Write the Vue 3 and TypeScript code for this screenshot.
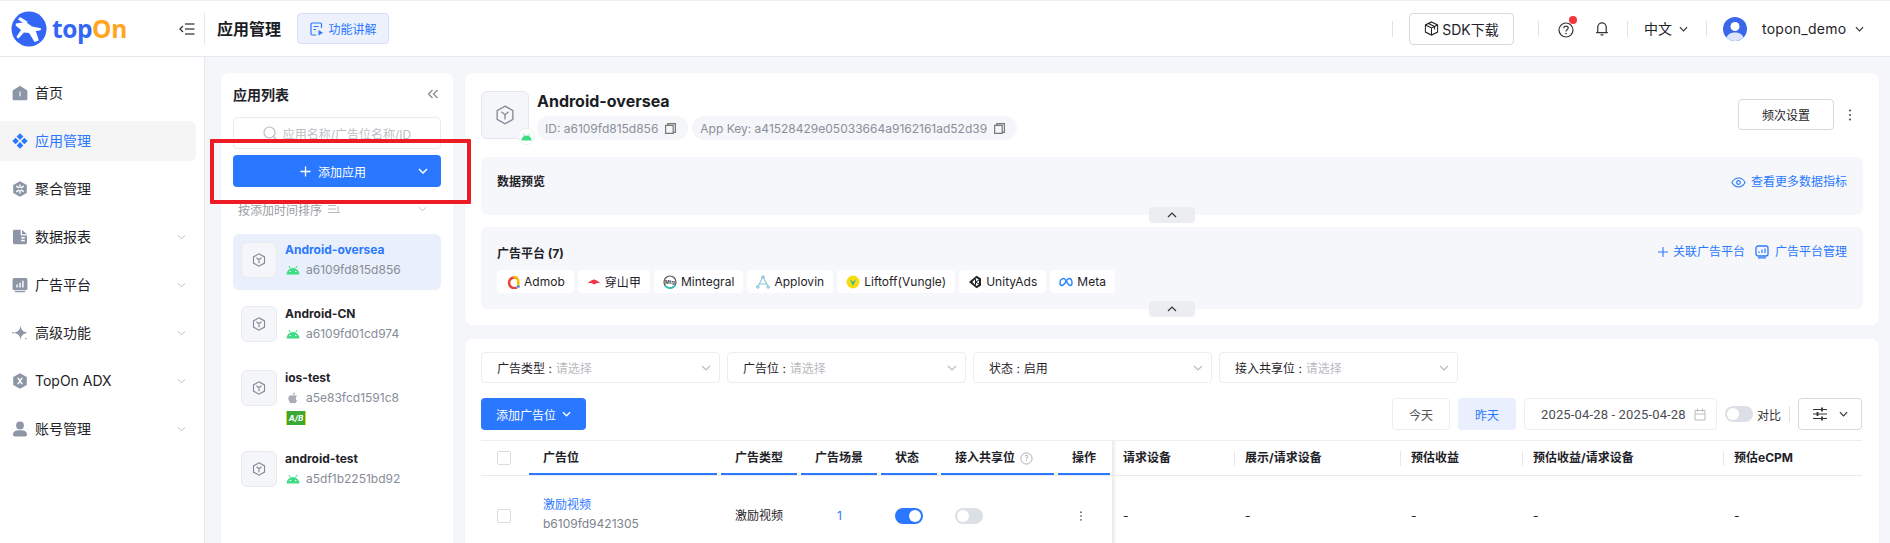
<script setup lang="ts">
interface Shape { d: string; fill: string }
interface MenuItem { label: string; active?: boolean; arrow?: boolean; shapes: Shape[] }
const G = '#8d96a6'
const W = '#ffffff'
const menu: MenuItem[] = [
  { label: '首页', shapes: [
    { d: 'M8 .8 14.6 5c.5.3.8.8.8 1.4v7.3c0 .9-.7 1.5-1.5 1.5H2.1c-.8 0-1.5-.6-1.5-1.5V6.4c0-.6.3-1.1.8-1.4z', fill: G },
    { d: 'M7.2 6.6h1.6v4.6H7.2z', fill: '#d8dce4' } ] },
  { label: '应用管理', active: true, shapes: [
    { d: 'M8 .3 11.3 3.6 8 6.9 4.7 3.6z', fill: '#2a78ff' },
    { d: 'M3.6 4.7 6.9 8 3.6 11.3.3 8z', fill: '#2a78ff' },
    { d: 'M12.4 4.7 15.7 8l-3.3 3.3L9.1 8z', fill: '#2a78ff' },
    { d: 'M8 9.1l3.3 3.3L8 15.7l-3.3-3.3z', fill: '#2a78ff' } ] },
  { label: '聚合管理', shapes: [
    { d: 'M8 .2 14.8 4v8L8 15.8 1.2 12V4z', fill: G },
    { d: 'M7.3 3.5h1.4v3.2H7.3zM7.3 9.3h1.4v3.2H7.3zM3.9 5.7l.7-1.2 2.8 1.7-.7 1.2zM8.6 9.5l.7-1.2 2.8 1.7-.7 1.2zM3.9 10.3l2.8-1.7.7 1.2-2.8 1.7zM8.6 6.2l2.8-1.7.7 1.2-2.8 1.7z', fill: W } ] },
  { label: '数据报表', arrow: true, shapes: [
    { d: 'M1 2.2C1 1.4 1.6.8 2.4.8h6.3v4.6c0 .6.5 1.1 1.1 1.1H15v7.3c0 .8-.6 1.4-1.4 1.4H2.4c-.8 0-1.4-.6-1.4-1.4z', fill: G },
    { d: 'M10 .9 15 5.2h-5z', fill: G },
    { d: 'M9.2 8h3.6v1.4H9.2zM9.2 10.8h3.6v1.4H9.2z', fill: W } ] },
  { label: '广告平台', arrow: true, shapes: [
    { d: 'M2.2 1h11.6c.9 0 1.6.7 1.6 1.6v9c0 .9-.7 1.6-1.6 1.6H2.2c-.9 0-1.6-.7-1.6-1.6v-9C.6 1.7 1.3 1 2.2 1zM3 14h10v1.2H3z', fill: G },
    { d: 'M4.4 7.4h1.4v3.2H4.4zM7.3 5.8h1.4v4.8H7.3zM10.2 3.8h1.4v6.8h-1.4z', fill: W } ] },
  { label: '高级功能', arrow: true, shapes: [
    { d: 'M8.6.6c.5 4.2 2.2 6.3 6.9 7.2-4.7.9-6.4 3-6.9 7.4-.5-4.4-2.2-6.5-6.9-7.4C6.4 6.9 8.1 4.8 8.6.6z', fill: G },
    { d: 'M.2 7.2h1.6v1.4H.2zM13.2 13h1.2v1.2h-1.2z', fill: G } ] },
  { label: 'TopOn ADX', arrow: true, shapes: [
    { d: 'M8 .2 14.8 4v8L8 15.8 1.2 12V4z', fill: G },
    { d: 'M5 4.8h1.7L8 6.8l1.3-2H11L8.9 8 11 11.2H9.3L8 9.2l-1.3 2H5L7.1 8z', fill: W } ] },
  { label: '账号管理', arrow: true, shapes: [
    { d: 'M8 .5a3.9 3.9 0 1 1 0 7.8A3.9 3.9 0 0 1 8 .5z', fill: G },
    { d: 'M1 13.4C1 10.8 3.4 9.3 8 9.3s7 1.5 7 4.1c0 1.2-.8 2-2 2H3c-1.2 0-2-.8-2-2z', fill: G } ] }
]

interface AppItem { name: string; id: string; os: 'android' | 'ios'; active?: boolean; ab?: boolean }
const apps: AppItem[] = [
  { name: 'Android-oversea', id: 'a6109fd815d856', os: 'android', active: true },
  { name: 'Android-CN', id: 'a6109fd01cd974', os: 'android' },
  { name: 'ios-test', id: 'a5e83fcd1591c8', os: 'ios', ab: true },
  { name: 'android-test', id: 'a5df1b2251bd92', os: 'android' }
]
const filters = [
  { label: '广告类型 :', value: '请选择', empty: true },
  { label: '广告位 :', value: '请选择', empty: true },
  { label: '状态 :', value: '启用', empty: false },
  { label: '接入共享位 :', value: '请选择', empty: true }
]
const metrics = ['请求设备', '展示/请求设备', '预估收益', '预估收益/请求设备', '预估eCPM']
</script>

<template>
  <div class="page">
    <header class="topbar">
      <div class="brand">
        <svg class="logo" viewBox="0 0 36 36" width="36" height="36">
          <circle cx="18" cy="18" r="17.500" fill="#3366f5" />
          <path d="M5 12.500 15 11l6 4.500 8 1.500c1.500.4 1.500 2-.2 2.400l-4 .6 3 9.500-4.200 1.600L18 22l-5-.5-5.600 6-2-1.600L10 19 4.600 14.600z" fill="#fff" />
          <path d="M9 6l8 5-4 1.500-6-4z" fill="#fff" />
        </svg>
        <span class="wordmark"><span class="wm-a">top</span><span class="wm-b">On</span></span>
        <svg class="fold" viewBox="0 0 16 14" width="16" height="14">
          <path d="M4 4 1 7l3 3" fill="none" stroke="#333" stroke-width="1.300" />
          <path d="M6 2h9.500M6 7h9.500M6 12h9.500" stroke="#555" stroke-width="1.300" />
        </svg>
      </div>
      <div class="head-rule"></div>
      <h1 class="page-title">应用管理</h1>
      <button class="guide">
        <svg viewBox="0 0 14 14" width="14" height="14">
          <path d="M11.500 6V2.200c0-.6-.5-1.200-1.200-1.200H2.200C1.500 1 1 1.600 1 2.200v9.600c0 .6.500 1.200 1.200 1.200h4" fill="none" stroke="#2a78ff" stroke-width="1.200" />
          <path d="M3.500 4.500h5M3.500 7.500h2.500" stroke="#2a78ff" stroke-width="1.200" />
          <path d="M8.500 8l4.500 2.700-4.500 2.700z" fill="#2a78ff" />
        </svg>
        <span>功能讲解</span>
      </button>
      <div class="head-right">
        <span class="v-rule"></span>
        <button class="sdk">
          <svg viewBox="0 0 16 16" width="15" height="15">
            <path d="M8 1 14.500 4.200v7.600L8 15 1.500 11.800V4.200zM1.500 4.200 8 7.500l6.500-3.300M8 7.500V15M4.800 2.700l6.500 3.300v3" fill="none" stroke="#222" stroke-width="1.100" />
          </svg>
          <span>SDK下载</span>
        </button>
        <span class="v-rule r2"></span>
        <span class="help">
          <svg viewBox="0 0 16 16" width="16" height="16">
            <circle cx="8" cy="8" r="7" fill="none" stroke="#333" stroke-width="1.200" />
            <path d="M5.800 6.200c0-1.300 1-2 2.200-2s2.200.8 2.200 1.900c0 1.700-2.200 1.600-2.200 3.300" fill="none" stroke="#333" stroke-width="1.200" />
            <circle cx="8" cy="11.500" r=".8" fill="#333" />
          </svg>
          <i class="dot"></i>
        </span>
        <svg class="bell" viewBox="0 0 14 16" width="14" height="15">
          <path d="M2.500 12V6.500a4.500 4.500 0 0 1 9 0V12M.8 12.500h12.400M5.500 14.800h3" fill="none" stroke="#333" stroke-width="1.300" />
        </svg>
        <span class="v-rule r3"></span>
        <span class="lang">中文</span>
        <svg class="ch lang-ch" viewBox="0 0 10 6" width="9" height="6"><path d="M1 1l4 4 4-4" /></svg>
        <span class="v-rule r4"></span>
        <span class="avatar">
          <svg viewBox="0 0 24 24" width="24" height="24">
            <circle cx="12" cy="12" r="12" fill="#3b68ea" />
            <circle cx="12" cy="9.500" r="4.500" fill="#fff" />
            <path d="M3.500 20.500C5 16.500 8.500 15.500 12 15.500s7 1 8.500 5a12 12 0 0 1-17 0z" fill="#dbe4fb" />
          </svg>
        </span>
        <span class="user">topon_demo</span>
        <svg class="ch user-ch" viewBox="0 0 10 6" width="9" height="6"><path d="M1 1l4 4 4-4" /></svg>
      </div>
    </header>

    <div class="body">
      <nav class="side">
        <div v-for="m in menu" :key="m.label" class="nav" :class="{ on: m.active }">
          <svg viewBox="0 0 16 16" width="16" height="16">
            <path v-for="(s, i) in m.shapes" :key="i" :d="s.d" :fill="s.fill" />
          </svg>
          <span class="nav-t">{{ m.label }}</span>
          <svg v-if="m.arrow" class="nav-ch" viewBox="0 0 10 6" width="9" height="6"><path d="M1 1l4 4 4-4" /></svg>
        </div>
      </nav>

      <main class="main">
        <section class="list">
          <div class="list-head">
            <span>应用列表</span>
            <svg viewBox="0 0 12 10" width="12" height="10">
              <path d="M5.500 1 1.500 5l4 4M10.500 1l-4 4 4 4" fill="none" stroke="#888" stroke-width="1.200" />
            </svg>
          </div>
          <div class="search">
            <svg viewBox="0 0 14 14" width="14" height="14">
              <circle cx="6.500" cy="6.500" r="5.500" fill="none" stroke="#bbb" stroke-width="1.200" />
              <path d="M10.500 10.500 13 13" stroke="#bbb" stroke-width="1.200" />
            </svg>
            <span>应用名称/广告位名称/ID</span>
          </div>
          <button class="add-app">
            <svg class="plus" viewBox="0 0 12 12" width="11" height="11"><path d="M6 .5v11M.5 6h11" stroke="#fff" stroke-width="1.400" /></svg>
            <span>添加应用</span>
            <svg class="add-ch" viewBox="0 0 10 6" width="10" height="6"><path d="M1 1l4 4 4-4" fill="none" stroke="#fff" stroke-width="1.500" /></svg>
          </button>
          <div class="sort">
            <span>按添加时间排序</span>
            <svg viewBox="0 0 14 10" width="14" height="10"><path d="M1 1.500h8M1 5h8M1 8.500h12M11 2v6" stroke="#bbb" stroke-width="1" fill="none" /></svg>
            <svg class="sort-ch" viewBox="0 0 10 6" width="9" height="6"><path d="M1 1l4 4 4-4" fill="none" stroke="#bbb" stroke-width="1" /></svg>
          </div>
          <div v-for="a in apps" :key="a.id" class="app" :class="{ on: a.active }">
            <div class="app-ico">
              <svg viewBox="0 0 14 14" width="14" height="14">
                <path d="M7 .8 12.500 3.900v6.200L7 13.200 1.500 10.100V3.900zM4.500 4.800 7 6.800l2.500-2M7 6.800v3.400" fill="none" stroke="#7f8795" stroke-width="1.100" />
              </svg>
            </div>
            <div>
              <div class="app-name">{{ a.name }}</div>
              <div class="app-id">
                <svg v-if="a.os === 'android'" class="os" viewBox="0 0 14 10" width="14" height="10">
                  <path d="M.5 9.500a6.500 6.500 0 0 1 13 0z" fill="#3ddc84" />
                  <path d="M3 1l1.300 2.200M11 1 9.700 3.200" stroke="#3ddc84" stroke-width="1" />
                  <circle cx="4.300" cy="6.500" r=".8" fill="#fff" /><circle cx="9.700" cy="6.500" r=".8" fill="#fff" />
                </svg>
                <svg v-else class="os" viewBox="0 0 16 16" width="14" height="14">
                  <path d="M11.200 8.500c0-1.600 1.300-2.400 1.400-2.400-.8-1.100-1.900-1.300-2.300-1.300-1-.1-1.900.6-2.400.6s-1.300-.6-2.100-.6C4.700 4.800 3.700 5.400 3.200 6.300c-1.100 1.900-.3 4.700.8 6.200.5.700 1.100 1.600 1.900 1.600s1.100-.5 2-.5 1.200.5 2 .5 1.400-.8 1.900-1.500c.6-.9.8-1.700.9-1.700-.1 0-1.500-.6-1.500-2.400zM9.700 3.700c.4-.5.7-1.200.6-1.900-.6 0-1.300.4-1.800.9-.4.4-.7 1.100-.6 1.800.7.100 1.300-.3 1.800-.8z" fill="#a9adb5" />
                </svg>
                <span>{{ a.id }}</span>
              </div>
              <div v-if="a.ab" class="ab">A/B</div>
            </div>
          </div>
        </section>

        <div class="right">
          <section class="card info">
            <div class="info-head">
              <div class="big-ico">
                <svg viewBox="0 0 14 14" width="20" height="20">
                  <path d="M7 .8 12.500 3.900v6.200L7 13.200 1.500 10.100V3.900zM4.500 4.800 7 6.800l2.500-2M7 6.800v3.400" fill="none" stroke="#7f8795" stroke-width=".9" />
                </svg>
                <span class="badge">
                  <svg viewBox="0 0 14 10" width="11" height="8">
                    <path d="M.5 9.500a6.500 6.500 0 0 1 13 0z" fill="#3ddc84" />
                    <path d="M3 1l1.300 2.200M11 1 9.700 3.200" stroke="#3ddc84" stroke-width="1" />
                  </svg>
                </span>
              </div>
              <div class="info-text">
                <div class="info-name">Android-oversea</div>
                <div class="pills">
                  <span class="pill">ID: a6109fd815d856
                    <svg viewBox="0 0 12 12" width="12" height="12"><path d="M3.500 3V1.500h7v8H9M1.500 3.200h7v7.300h-7z" fill="none" stroke="#777" stroke-width="1.100" /></svg>
                  </span>
                  <span class="pill">App Key: a41528429e05033664a9162161ad52d39
                    <svg viewBox="0 0 12 12" width="12" height="12"><path d="M3.500 3V1.500h7v8H9M1.500 3.200h7v7.300h-7z" fill="none" stroke="#777" stroke-width="1.100" /></svg>
                  </span>
                </div>
              </div>
              <button class="freq">频次设置</button>
              <svg class="more" viewBox="0 0 4 14" width="4" height="14">
                <circle cx="2" cy="2.500" r="1.100" fill="#555" /><circle cx="2" cy="7" r="1.100" fill="#555" /><circle cx="2" cy="11.500" r="1.100" fill="#555" />
              </svg>
            </div>

            <div class="panel preview">
              <span class="panel-t">数据预览</span>
              <span class="link">
                <svg viewBox="0 0 16 12" width="15" height="11">
                  <path d="M.8 6C2.500 2.800 5 1.200 8 1.200s5.500 1.600 7.200 4.800c-1.700 3.200-4.200 4.800-7.200 4.800S2.500 9.200.8 6z" fill="none" stroke="#2a78ff" stroke-width="1.100" />
                  <circle cx="8" cy="6" r="2" fill="none" stroke="#2a78ff" stroke-width="1.200" />
                </svg>
                查看更多数据指标
              </span>
              <span class="tab"><svg viewBox="0 0 10 6" width="10" height="6"><path d="M1 5l4-4 4 4" fill="none" stroke="#333" stroke-width="1.200" /></svg></span>
            </div>

            <div class="panel platform">
              <div class="plat-top">
                <span class="panel-t">广告平台 (7)</span>
                <span class="link l-plus">
                  <svg viewBox="0 0 10 10" width="10" height="10"><path d="M5 0v10M0 5h10" stroke="#2a78ff" stroke-width="1.100" /></svg>
                  关联广告平台
                </span>
                <span class="link l-mgr">
                  <svg viewBox="0 0 14 14" width="14" height="14">
                    <rect x="1" y="1" width="12" height="10" rx="2" fill="none" stroke="#2a78ff" stroke-width="1.300" />
                    <path d="M4 8V6.500M7 8V4.500M10 8V3.500M3 12.800h8" stroke="#2a78ff" stroke-width="1.200" />
                  </svg>
                  广告平台管理
                </span>
              </div>
              <div class="chips">
                <span class="chip">
                  <svg viewBox="0 0 14 14" width="14" height="14">
                    <path d="M10.800 12.500A5.300 5.300 0 1 1 11.500 3.500" fill="none" stroke="#ea4335" stroke-width="2.600" />
                    <path d="M7.500 1.700A5.300 5.300 0 0 1 12.300 7v5" fill="none" stroke="#fbbc04" stroke-width="2.600" />
                    <path d="M12.300 10.500v2.200" stroke="#4285f4" stroke-width="2.600" />
                  </svg>Admob
                </span>
                <span class="chip">
                  <svg viewBox="0 0 14 14" width="14" height="14"><path d="M.5 8.500C2.500 6.500 4.500 5 7 4.500c2.500.5 4.500 2 6.500 4-1.500-.4-2.500-.6-4-.2L7 9.500 5 8.300c-1.500-.4-3-.2-4.500.2z" fill="#f0344a" /></svg>穿山甲
                </span>
                <span class="chip">
                  <svg viewBox="0 0 14 14" width="14" height="14">
                    <circle cx="7" cy="7" r="6" fill="none" stroke="#555" stroke-width="1.200" />
                    <path d="M2 10.500A6 6 0 0 0 12.500 9.500" fill="none" stroke="#22c7b4" stroke-width="1.500" />
                    <text x="7" y="8.800" font-size="5" font-weight="700" text-anchor="middle" fill="#444">Mtg</text>
                  </svg>Mintegral
                </span>
                <span class="chip">
                  <svg viewBox="0 0 14 14" width="14" height="14">
                    <path d="M7 1.500 1.500 12.500M7 1.500l5.500 11M3.500 9h7" fill="none" stroke="#8bc3dd" stroke-width="1.100" />
                    <circle cx="7" cy="2" r="1.300" fill="none" stroke="#8bc3dd" /><circle cx="1.800" cy="12" r="1.300" fill="none" stroke="#8bc3dd" /><circle cx="12.200" cy="12" r="1.300" fill="none" stroke="#8bc3dd" />
                  </svg>Applovin
                </span>
                <span class="chip">
                  <svg viewBox="0 0 14 14" width="14" height="14">
                    <circle cx="7" cy="7" r="6.500" fill="#f9dc0b" />
                    <path d="M3.800 4.200 7 11l3.200-6.800L7 6.800z" fill="#35b8a0" />
                  </svg>Liftoff(Vungle)
                </span>
                <span class="chip">
                  <svg viewBox="0 0 14 14" width="14" height="14">
                    <path d="M8.500.8 13 3.500v7l-4.500 2.700L1 7z" fill="#222" />
                    <path d="M8.300 3 11 4.700v4.600L8.300 11l-4-4z" fill="#fff" />
                    <path d="M7.500 4v6M7.500 7l3.500-2M7.500 7l3.500 2" stroke="#222" stroke-width="1" />
                  </svg>UnityAds
                </span>
                <span class="chip">
                  <svg viewBox="0 0 14 10" width="14" height="10">
                    <path d="M4.500 1.500C2.500 1.500 1 3.500 1 6c0 1.600.8 2.500 2 2.500C6 8.500 7.500 1.500 10 1.500c1.800 0 3 2 3 4.500 0 1.600-.8 2.500-1.900 2.500C8.500 8.500 7 1.500 4.500 1.500z" fill="none" stroke="#2f88ff" stroke-width="1.500" />
                  </svg>Meta
                </span>
              </div>
              <span class="tab"><svg viewBox="0 0 10 6" width="10" height="6"><path d="M1 5l4-4 4 4" fill="none" stroke="#333" stroke-width="1.200" /></svg></span>
            </div>
          </section>

          <section class="card units">
            <div class="filters">
              <div v-for="f in filters" :key="f.label" class="filter">
                <span class="f-l">{{ f.label }}</span>
                <span :class="f.empty ? 'f-e' : 'f-v'">{{ f.value }}</span>
                <svg viewBox="0 0 10 6" width="10" height="6"><path d="M1 1l4 4 4-4" fill="none" stroke="#bbb" stroke-width="1.200" /></svg>
              </div>
            </div>
            <div class="actions">
              <button class="add-unit">添加广告位
                <svg viewBox="0 0 10 6" width="9" height="6"><path d="M1 1l4 4 4-4" fill="none" stroke="#fff" stroke-width="1.400" /></svg>
              </button>
              <button class="day d1">今天</button>
              <button class="day d2">昨天</button>
              <div class="range">
                <span>2025-04-28 - 2025-04-28</span>
                <svg viewBox="0 0 12 13" width="12" height="13"><path d="M1 2.500h10v9.500H1zM1 6h10M3.500.5v3M8.500.5v3" fill="none" stroke="#bbb" stroke-width="1" /></svg>
              </div>
              <span class="sw off cmp"><i></i></span>
              <span class="cmp-t">对比</span>
              <span class="cmp-rule"></span>
              <button class="tune">
                <svg viewBox="0 0 14 14" width="14" height="14"><path d="M0 2.500h14M0 7h14M0 11.500h14" stroke="#333" stroke-width="1.200" /><path d="M9 .5v4M4.500 5v4M9 9.500v4" stroke="#333" stroke-width="1.800" /></svg>
                <svg class="ch" viewBox="0 0 10 6" width="9" height="6"><path d="M1 1l4 4 4-4" /></svg>
              </button>
            </div>
            <div class="table">
              <div class="tr thead">
                <div class="td tc0"><i class="cb"></i></div>
                <div class="td th u">广告位</div>
                <div class="td th u">广告类型</div>
                <div class="td th u">广告场景</div>
                <div class="td th u">状态</div>
                <div class="td th u">接入共享位
                  <svg class="q" viewBox="0 0 14 14" width="13" height="13"><circle cx="7" cy="7" r="6" fill="none" stroke="#aaa" /><text x="7" y="10" font-size="8.500" text-anchor="middle" fill="#aaa">?</text></svg>
                </div>
                <div class="td th u last">操作</div>
                <div v-for="(m, i) in metrics" :key="m" class="td th mt" :class="{ edge: i === 0, rule: i > 0 }">{{ m }}</div>
              </div>
              <div class="tr trow">
                <div class="td tc0"><i class="cb"></i></div>
                <div class="td unit"><div class="unit-n">激励视频</div><div class="unit-i">b6109fd9421305</div></div>
                <div class="td">激励视频</div>
                <div class="td num">1</div>
                <div class="td"><span class="sw"><i></i></span></div>
                <div class="td"><span class="sw off"><i></i></span></div>
                <div class="td">
                  <svg class="more2" viewBox="0 0 4 14" width="4" height="12"><circle cx="2" cy="2.500" r="1" fill="#555" /><circle cx="2" cy="7" r="1" fill="#555" /><circle cx="2" cy="11.500" r="1" fill="#555" /></svg>
                </div>
                <div v-for="(m, i) in metrics" :key="m" class="td mt" :class="{ edge: i === 0 }">-</div>
              </div>
            </div>
          </section>
        </div>
      </main>
    </div>
    <div class="callout"></div>
  </div>
</template>

<style>
html, body { margin: 0; padding: 0; background: #fff; }
</style>

<style scoped>
.page { position: relative; width: 1890px; height: 543px; overflow: hidden; display: flex; flex-direction: column; font-family: Inter, "Noto Sans CJK SC", sans-serif; font-size: 12px; color: #1f2329; background: #fff; }
button { font-family: inherit; cursor: pointer; padding: 0; }
.topbar { box-sizing: border-box; height: 57px; flex: none; display: flex; align-items: center; background: #fff; border-top: 1px solid #eceef1; border-bottom: 1px solid #e6e9ef; }
.brand { width: 204px; flex: none; display: flex; align-items: center; padding-left: 11px; box-sizing: border-box; }
.logo { flex: none; }
.wordmark { margin-left: 5px; font-family: "Open Sans", sans-serif; font-weight: 700; font-size: 24.500px; letter-spacing: -.4px; line-height: 30px; }
.wm-a { color: #3366f5; }
.wm-b { color: #ffa51f; }
.fold { margin-left: 52px; flex: none; }
.head-rule { width: 1px; height: 32px; background: #e6e8ec; flex: none; }
.page-title { margin: 0 0 0 12px; font-size: 16px; font-weight: 700; line-height: 22px; color: #1a1d23; }
.guide { margin-left: 16px; width: 92px; height: 31px; display: flex; align-items: center; justify-content: center; gap: 5px; font-size: 12px; color: #2a78ff; background: #edf1fc; border: 1px solid #d6def5; border-radius: 4px; }
.head-right { flex: 1; display: flex; align-items: center; }
.v-rule { width: 1px; height: 16px; background: #dfe2e7; flex: none; margin-left: 1003px; }
.sdk { margin-left: 16px; width: 105px; height: 32px; display: flex; align-items: center; justify-content: center; gap: 3px; font-size: 14px; background: #fff; border: 1px solid #d6d8dc; border-radius: 4px; color: #1f2329; }
.v-rule.r2 { margin-left: 24px; }
.help { position: relative; margin-left: 19px; display: flex; margin-top: 2px; }
.dot { position: absolute; top: -6px; right: -3px; width: 8px; height: 8px; border-radius: 50%; background: #f5353b; }
.bell { margin-left: 21px; flex: none; }
.v-rule.r3 { margin-left: 18px; }
.lang { margin-left: 16px; font-size: 14px; line-height: 20px; }
.ch { fill: none; stroke: #333; stroke-width: 1.300; flex: none; }
.lang-ch { margin-left: 7px; }
.v-rule.r4 { margin-left: 18px; }
.avatar { margin-left: 16px; width: 24px; height: 24px; display: flex; }
.user { margin-left: 15px; font-size: 14px; letter-spacing: .25px; line-height: 20px; }
.user-ch { margin-left: 9px; }

.body { flex: 1; display: flex; min-height: 0; }
.side { box-sizing: border-box; width: 205px; flex: none; padding-top: 16px; border-right: 1px solid #e6e9ef; background: #fff; }
.nav { width: 196px; height: 40px; margin-bottom: 8px; padding-left: 12px; box-sizing: border-box; display: flex; align-items: center; border-radius: 0 6px 6px 0; position: relative; }
.nav.on { background: #f5f5f6; color: #2a78ff; }
.nav-t { margin-left: 7px; font-size: 14px; line-height: 20px; }
.nav-ch { margin-left: auto; margin-right: 10px; fill: none; stroke: #b3b8c2; stroke-width: 1; }
.main { flex: 1; min-width: 0; display: flex; gap: 12px; padding: 16px 11px 0 16px; background: #f4f6fa; }
.list { box-sizing: border-box; width: 232px; flex: none; padding: 11px 12px 0; background: #fff; border-radius: 8px 8px 0 0; }
.list-head { height: 20px; display: flex; align-items: center; justify-content: space-between; font-size: 14px; font-weight: 700; padding-right: 2px; }
.search { box-sizing: border-box; height: 32px; margin-top: 13px; display: flex; align-items: center; justify-content: center; gap: 6px; color: #bdbfc4; border: 1px solid #e9ebf0; border-radius: 4px; }
.add-app { box-sizing: border-box; width: 208px; height: 32px; margin-top: 6px; padding-right: 8px; position: relative; display: flex; align-items: center; justify-content: center; gap: 7px; color: #fff; font-size: 12px; background: #2a78ff; border: 0; border-radius: 4px; }
.add-ch { position: absolute; right: 13px; top: 13px; }
.sort { height: 18px; margin-top: 13px; padding-left: 5px; display: flex; align-items: center; gap: 5px; color: #9a9da3; }
.sort-ch { margin-left: auto; margin-right: 14px; }
.app { display: flex; gap: 8px; padding: 8px 8px 12px; margin-bottom: 8px; border-radius: 6px; }
.list .sort + .app { margin-top: 16px; }
.app.on { background: #e9f0fb; }
.app-ico { box-sizing: border-box; width: 36px; height: 36px; flex: none; display: flex; align-items: center; justify-content: center; background: #f4f6fa; border: 1px solid #e8eaf0; border-radius: 6px; }
.app-name { font-weight: 700; line-height: 16px; color: #1f2329; }
.app.on .app-name { color: #2a78ff; }
.app-id { margin-top: 4px; display: flex; align-items: center; gap: 6px; line-height: 16px; color: #868c98; }
.os { flex: none; margin-left: 1px; }
.ab { box-sizing: border-box; width: 20px; height: 14px; margin: 5px 0 -2px 1px; font-size: 8px; font-style: italic; font-weight: 700; line-height: 14px; text-align: center; color: #fff; background: #3aaa35; border-left: 1px solid #e5d51e; border-right: 1px solid #e5d51e; }

.right { flex: 1; min-width: 0; display: flex; flex-direction: column; gap: 14px; }
.card { background: #fff; border-radius: 8px; flex: none; }
.info { box-sizing: border-box; height: 252px; padding: 18px 16px 0; }
.info-head { height: 48px; display: flex; align-items: flex-start; }
.big-ico { position: relative; box-sizing: border-box; width: 48px; height: 48px; flex: none; display: flex; align-items: center; justify-content: center; background: #f4f6fa; border: 1px solid #e4e7ee; border-radius: 6px; }
.badge { position: absolute; left: 36px; top: 36px; width: 15px; height: 15px; background: #fff; border: 1px solid #eceef2; border-radius: 50%; display: flex; align-items: center; justify-content: center; }
.info-text { margin-left: 8px; flex: 1; }
.info-name { font-size: 16px; font-weight: 700; line-height: 20px; color: #1a1d23; }
.pills { display: flex; gap: 4px; margin-top: 5px; }
.pill { box-sizing: border-box; height: 24px; padding: 0 11px 0 8px; display: flex; align-items: center; gap: 6px; color: #8a8f99; background: #f4f6fa; border-radius: 12px; white-space: nowrap; }
.pill svg { width: 13px; height: 13px; }
.freq { width: 96px; height: 31px; margin-top: 8px; font-size: 12px; color: #1f2329; background: #fff; border: 1px solid #d6d8dc; border-radius: 4px; }
.more { margin: 17px 11px 0 14px; flex: none; }
.panel { position: relative; border-radius: 6px; background: #f6f7fa; padding: 0 16px; }
.panel-t { font-weight: 700; line-height: 18px; }
.preview { box-sizing: border-box; height: 58px; margin-top: 18px; padding-top: 16px; display: flex; align-items: flex-start; justify-content: space-between; }
.link { display: inline-flex; align-items: center; gap: 5px; color: #2a78ff; line-height: 18px; white-space: nowrap; }
.tab { position: absolute; left: 668px; bottom: -8px; width: 46px; height: 16px; display: flex; align-items: center; justify-content: center; background: #ebedf0; border-radius: 4px; }
.platform { height: 82px; margin-top: 12px; }
.plat-top { display: flex; align-items: center; padding-top: 17px; height: 18px; }
.plat-top .panel-t { margin-right: auto; transform: translateY(1px); }
.plat-top .link { transform: translateY(-1px); }
.l-mgr { margin-left: 10px; gap: 6px; }
.chips { display: flex; gap: 4px; margin-top: 8px; }
.chip { box-sizing: border-box; height: 23px; padding: 0 9px; display: flex; align-items: center; gap: 4px; background: #fff; border-radius: 4px; white-space: nowrap; letter-spacing: .03px; }

.units { padding: 13px 17px 0 16px; height: 300px; box-sizing: border-box; }
.filters { display: flex; gap: 7px; }
.filter { box-sizing: border-box; width: 239px; height: 31px; padding: 0 8px 0 15px; display: flex; align-items: center; gap: 4px; background: #fff; border: 1px solid #ebedf0; border-radius: 4px; }
.filter svg { margin-left: auto; }
.f-e { color: #b9bbc0; }
.actions { height: 32px; margin-top: 15px; display: flex; align-items: center; }
.add-unit { width: 105px; height: 32px; display: flex; align-items: center; justify-content: center; gap: 6px; color: #fff; font-size: 12px; background: #2a78ff; border: 0; border-radius: 4px; margin-right: auto; }
.day { width: 58px; height: 32px; font-size: 12px; border-radius: 4px; }
.d1 { color: #555; background: #fff; border: 1px solid #ebedf0; margin-right: 8px; }
.d2 { color: #2a78ff; background: #e9effc; border: 0; margin-right: 8px; }
.range { box-sizing: border-box; width: 193px; height: 32px; padding: 0 10px 0 16px; display: flex; align-items: center; justify-content: space-between; font-family: Roboto, sans-serif; font-size: 13px; letter-spacing: .15px; color: #4a4d55; border: 1px solid #ebedf0; border-radius: 4px; white-space: nowrap; }
.sw { position: relative; display: inline-block; width: 28px; height: 16px; border-radius: 8px; background: #2a78ff; flex: none; }
.sw i { position: absolute; top: 2px; left: 14px; width: 12px; height: 12px; border-radius: 50%; background: #fff; }
.sw.off { background: #dcdfe6; }
.sw.off i { left: 2px; }
.cmp { margin-left: 8px; }
.cmp-t { margin-left: 4px; color: #333; }
.cmp-rule { width: 1px; height: 16px; background: #e2e4e8; margin-left: 8px; }
.tune { box-sizing: border-box; width: 64px; height: 32px; margin-left: 8px; display: flex; align-items: center; justify-content: center; gap: 12px; background: #fff; border: 1px solid #d6d8dc; border-radius: 4px; }
.table { margin-top: 10px; border-top: 1px solid #eceef1; }
.tr { display: grid; grid-template-columns: 48px 192px 80px 80px 60px 117px 54px 122px 166px 122px 201px 139px; }
.thead { height: 34px; border-bottom: 1px solid #e8eaee; box-sizing: content-box; }
.trow { height: 80px; }
.td { position: relative; display: flex; flex-direction: column; justify-content: center; padding-left: 14px; box-sizing: border-box; white-space: nowrap; line-height: 16px; }
.tc0 { padding-left: 16px; }
.th { flex-direction: row; align-items: center; justify-content: flex-start; font-weight: 700; }
.th.u::after { content: ""; position: absolute; left: 0; right: 4px; bottom: 0; height: 2px; background: #2a78ff; }
.th.u.last::after { right: 2px; }
.q { margin-left: 5px; font-weight: 400; }
.mt { padding-left: 11px; }
.rule::before { content: ""; position: absolute; left: 0; top: 10px; height: 15px; width: 1px; background: #e6e8ec; }
.edge { box-shadow: inset 6px 0 5px -5px rgba(0, 0, 0, .14); }
.cb { display: block; box-sizing: border-box; width: 14px; height: 14px; background: #fff; border: 1px solid #d9dce2; border-radius: 2px; }
.unit { padding-bottom: 3px; }
.unit-n { color: #2a78ff; }
.unit-i { margin-top: 3px; color: #7d828c; }
.num { color: #2a78ff; padding-left: 36px; }
.more2 { margin-left: 7px; }
.callout { position: absolute; left: 210px; top: 139px; width: 261px; height: 65px; box-sizing: border-box; border: 4px solid #ed1c24; border-radius: 1px; pointer-events: none; }
</style>
